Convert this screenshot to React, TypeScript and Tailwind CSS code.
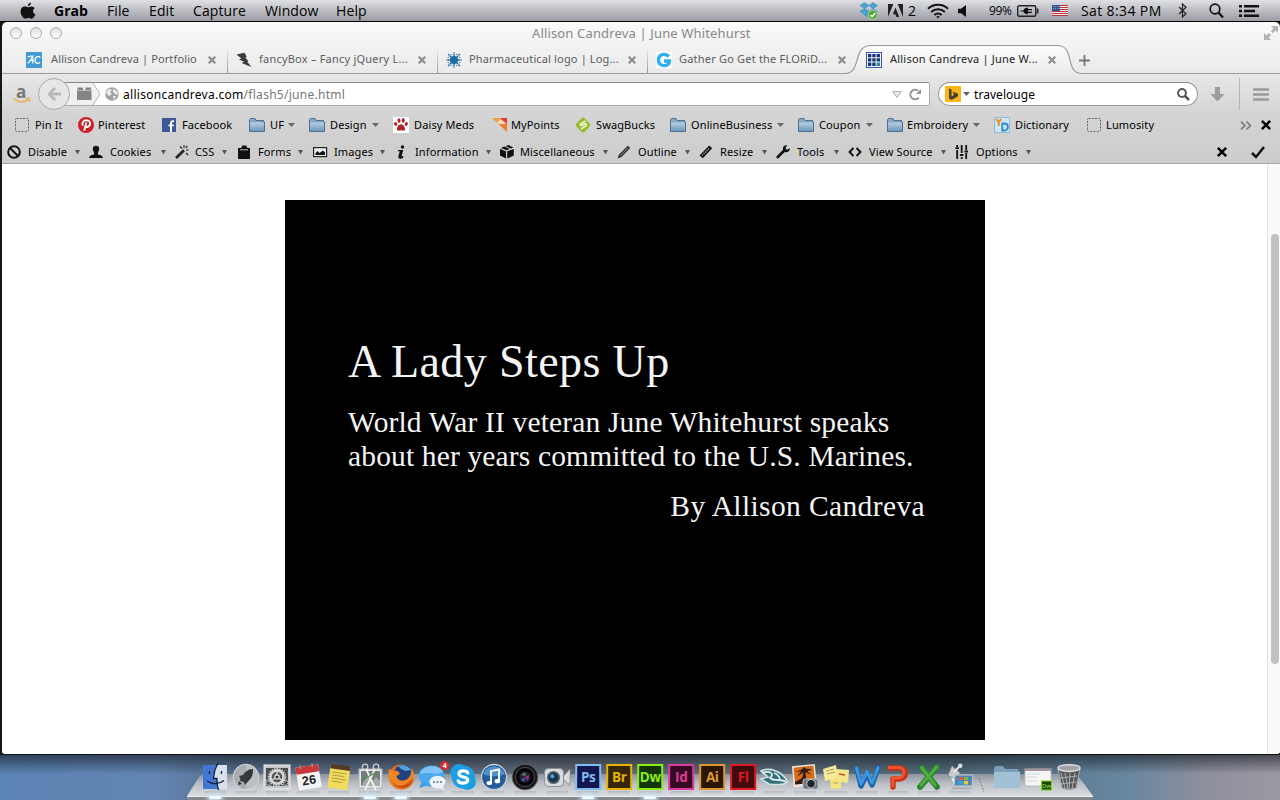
import React from "react";

const MENUS = [
  { t: "File", w: "w-[42px]" },
  { t: "Edit", w: "w-[44px]" },
  { t: "Capture", w: "w-[72px]" },
  { t: "Window", w: "w-[71px]" },
  { t: "Help", w: "w-[50px]" },
];

const AppleLogo = () => (
  <svg width="16" height="18" viewBox="0 0 16 18" fill="#111">
    <path d="M11 0.6C11.1 2.4 9.6 4.1 7.9 4.2C7.7 2.5 9.2 0.9 11 0.6Z" />
    <path d="M8.1 5.2C9 5.2 9.8 4.4 11.4 4.4C12.9 4.4 14.2 5.3 14.8 6.2C12.2 7.6 12.6 11.2 15.4 12.3C14.7 14.2 13.2 16.7 11.6 16.7C10.4 16.7 10 16 8.5 16C7 16 6.5 16.7 5.4 16.7C3.3 16.7 0.6 12.6 0.6 9.4C0.6 6.2 2.6 4.5 4.7 4.5C6.2 4.5 7.3 5.2 8.1 5.2Z" />
  </svg>
);

const Menubar = () => (
  <header className="flex h-[22px] shrink-0 items-center border-b border-black bg-gradient-to-b from-[#dfe0e4] to-[#9c9da3] font-['Lucida_Grande','Open_Sans','Noto_Sans',sans-serif] text-[14px] leading-[20px] text-black">
    <div className="w-[54px] shrink-0 pl-[20px]"><AppleLogo /></div>
    <div className="w-[53px] shrink-0 font-bold">Grab</div>
    {MENUS.map((m) => (
      <div key={m.t} className={`${m.w} shrink-0 whitespace-nowrap tracking-[0.1px]`}>{m.t}</div>
    ))}
    <div className="grow" />
    <div className="flex w-[29px] shrink-0">
      <svg width="20" height="19" viewBox="0 0 20 19">
        <g fill="#4ba3d4" stroke="#2a7db0" strokeWidth=".5">
          <path d="M5.5 1.5L10 4.5L5.5 7.5L1 4.5Z" />
          <path d="M14 1.5L18.5 4.5L14 7.5L10 4.5Z" />
          <path d="M5.5 7.5L10 10.5L5.5 13.5L1 10.5Z" />
          <path d="M14 7.5L18.5 10.5L14 13.5L10 10.5Z" />
          <path d="M10 11.5L14 14L10 16.5L5.5 14Z" />
        </g>
        <circle cx="13.8" cy="13.8" r="4.6" fill="#4fa834" stroke="#b9e2a9" strokeWidth=".8" />
        <path d="M11.5 14L13.2 15.8L16.2 12" fill="none" stroke="#fff" strokeWidth="1.4" />
      </svg>
    </div>
    <div className="flex w-[39px] shrink-0 items-center gap-[5px]">
      <svg width="15" height="13" viewBox="0 0 15 13" fill="#222">
        <path d="M0 0H5.3L0 13ZM9.7 0H15V13ZM7.5 3.6L11.2 13H8.4L7.3 10.2H4.8Z" />
      </svg>
      <span>2</span>
    </div>
    <div className="w-[31px] shrink-0">
      <svg width="22" height="16" viewBox="0 0 22 16" fill="none" stroke="#111" strokeWidth="2">
        <path d="M1 5.8C6.5 0.4 15.5 0.4 21 5.8" />
        <path d="M4.2 9C8 5.4 14 5.4 17.8 9" />
        <path d="M7.3 12.1C9.4 10.1 12.6 10.1 14.7 12.1" />
        <path d="M9.3 13.6Q11 12.3 12.7 13.6L11 15.6Z" fill="#111" stroke="none" />
      </svg>
    </div>
    <div className="w-[31px] shrink-0">
      <svg width="9" height="12" viewBox="0 0 9 12" fill="#111"><path d="M0 3.8H3L8 0V12L3 8.2H0Z" /></svg>
    </div>
    <div className="w-[28px] shrink-0 text-[12px] tracking-[-0.4px]">99%</div>
    <div className="w-[35px] shrink-0">
      <svg width="22" height="12" viewBox="0 0 22 12">
        <rect x=".7" y=".7" width="18" height="10.6" rx="1.5" fill="none" stroke="#222" strokeWidth="1.4" />
        <path d="M19.8 3.5H21.5V8.5H19.8Z" fill="#222" />
        <path d="M3.5 5.4H6.3C7 3.3 9 2.8 11 2.8V4H15V5.3H11V6.7H15V8H11V9.2C9 9.2 7 8.7 6.3 6.6H3.5Z" fill="#111" />
      </svg>
    </div>
    <div className="w-[29px] shrink-0">
      <svg width="16" height="11" viewBox="0 0 16 11">
        <rect width="16" height="11" fill="#f1ecec" />
        <path d="M0 .5H16M0 2.5H16M0 4.5H16M0 6.5H16M0 8.5H16M0 10.5H16" stroke="#b83440" strokeWidth="1" />
        <rect width="8" height="6" fill="#33508f" />
        <path d="M1 1.5H8M1 3.5H8" stroke="#a9b6d2" strokeWidth=".8" strokeDasharray="1 1" />
      </svg>
    </div>
    <div className="w-[97px] shrink-0 whitespace-nowrap tracking-[0.38px]">Sat 8:34 PM</div>
    <div className="w-[31px] shrink-0">
      <svg width="9" height="15" viewBox="0 0 9 15" fill="none" stroke="#222" strokeWidth="1.2"><path d="M1 4L8 10.8L4.5 14V1L8 4.2L1 11" /></svg>
    </div>
    <div className="w-[30px] shrink-0">
      <svg width="15" height="16" viewBox="0 0 15 16" fill="none" stroke="#111"><circle cx="6" cy="6" r="4.8" strokeWidth="1.7" /><path d="M9.4 9.6L14 14.6" strokeWidth="2.2" /></svg>
    </div>
    <div className="w-[41px] shrink-0">
      <svg width="21" height="14" viewBox="0 0 21 14" fill="#111"><path d="M0 1H3V3.6H0ZM5 1H20V3.6H5ZM0 5.7H3V8.3H0ZM5 5.7H16V8.3H5ZM0 10.4H3V13H0ZM5 10.4H20V13H5Z" /></svg>
    </div>
  </header>
);

const CloseX = ({ c = "#8d8d8d", s = 8, sw = 2.2 }: { c?: string; s?: number; sw?: number }) => (
  <svg width={s} height={s} viewBox="0 0 8 8" fill="none" stroke={c} strokeWidth={sw}><path d="M.7 .7L7.3 7.3M7.3 .7L.7 7.3" /></svg>
);

const FavAC = () => (
  <svg width="16" height="16" viewBox="0 0 16 16">
    <rect width="16" height="16" fill="#429bd3" />
    <path d="M1.5 10.5C3 12 4.8 7 6.8 4.5V11.5M2 5.5C2.5 3.8 5 4 7 4.3M3.5 8.5H8M14 6C14.3 3.8 9.3 3.6 9 8.2C9 12.2 13 12 14 10" fill="none" stroke="#fff" strokeWidth="1.2" />
  </svg>
);
const FavBolt = () => (
  <svg width="16" height="16" viewBox="0 0 16 16" fill="#3c3c3c"><path d="M.5 2.5L8.5 .8L10.8 5L9.3 5.6L12.6 9.2L11.2 9.8L15.5 15L5.6 11L8 9.8L3 7.6L5.3 6.4Z" /></svg>
);
const FavSplat = () => (
  <svg width="16" height="16" viewBox="0 0 16 16">
    <circle cx="8" cy="8" r="4" fill="#1b6e9e" />
    <path d="M8 2V14M2 8H14M3.5 3.5L12.5 12.5M12.5 3.5L3.5 12.5" stroke="#1b6e9e" strokeWidth="1.3" />
    <g fill="#1b6e9e"><circle cx="8" cy="1" r=".8" /><circle cx="8" cy="15" r=".8" /><circle cx="1" cy="8" r=".8" /><circle cx="15" cy="8" r=".8" /><circle cx="2.6" cy="2.6" r=".9" /><circle cx="13.4" cy="2.6" r=".9" /><circle cx="2.6" cy="13.4" r=".9" /><circle cx="13.4" cy="13.4" r=".9" /><circle cx="5.2" cy="2.4" r=".6" /><circle cx="10.8" cy="2.4" r=".6" /><circle cx="5.2" cy="13.6" r=".6" /><circle cx="10.8" cy="13.6" r=".6" /><circle cx="2.2" cy="5.4" r=".6" /><circle cx="13.8" cy="5.4" r=".6" /><circle cx="2.2" cy="10.6" r=".6" /><circle cx="13.8" cy="10.6" r=".6" /></g>
  </svg>
);
const FavG = () => (
  <svg width="16" height="16" viewBox="0 0 16 16">
    <rect width="16" height="16" fill="#fff" />
    <path d="M12.8 4.6C11.6 3 9.8 2.4 8 2.4C4.6 2.4 2.4 4.8 2.4 8C2.4 11.4 4.8 13.6 8.1 13.6C11.2 13.6 13.4 11.8 13.4 9H8" fill="none" stroke="#2bb0f2" strokeWidth="3.4" />
  </svg>
);
const FavGrid = () => (
  <svg width="16" height="16" viewBox="0 0 16 16">
    <rect x=".5" y=".5" width="15" height="15" fill="#f1f4fb" stroke="#3b58b0" />
    <path d="M2 2H5.3V5.3H2ZM6.3 2H9.6V5.3H6.3ZM10.6 2H14V5.3H10.6ZM2 6.3H5.3V9.6H2ZM6.3 6.3H9.6V9.6H6.3ZM10.6 6.3H14V9.6H10.6ZM2 10.6H5.3V14H2ZM6.3 10.6H9.6V14H6.3Z" fill="#173474" />
    <path d="M10.6 10.6H14V14H10.6Z" fill="#258b8d" />
  </svg>
);

const TABS = [
  { t: "Allison Candreva | Portfolio", i: <FavAC />, w: "w-[209px]", pad: "pl-[8px]", gap: "w-[25px]", tx: "w-[157px]", tr: "tracking-[0.13px]", line: false },
  { t: "fancyBox – Fancy jQuery L...", i: <FavBolt />, w: "w-[210px]", pad: "pl-[9px]", gap: "w-[23px]", tx: "w-[159px]", tr: "tracking-[0.22px]", line: true },
  { t: "Pharmaceutical logo | Log...", i: <FavSplat />, w: "w-[210px]", pad: "pl-[9px]", gap: "w-[23px]", tx: "w-[159px]", tr: "tracking-[0.15px]", line: true },
  { t: "Gather Go Get the FLORiD...", i: <FavG />, w: "w-[210px]", pad: "pl-[9px]", gap: "w-[23px]", tx: "w-[159px]", tr: "tracking-[0.2px]", line: true },
];

const TabStrip = () => (
  <div className="relative flex h-[30px] shrink-0 items-center text-[11px] text-[#5c5c5c]">
    <svg className="absolute left-0 top-0" width="1278" height="32" viewBox="0 0 1278 32">
      <defs>
        <linearGradient id="tab" x1="0" y1="0" x2="0" y2="1"><stop offset="0" stopColor="#fcfcfc" /><stop offset="1" stopColor="#ebebeb" /></linearGradient>
      </defs>
      <path d="M843 29.5C860 29.5 850 1.5 869 1.5H1055C1074 1.5 1062 29.5 1080 29.5V31H843Z" fill="url(#tab)" />
      <path d="M0 29.5H843C860 29.5 850 1.5 869 1.5H1055C1074 1.5 1062 29.5 1080 29.5H1278" fill="none" stroke="#9a9a9a" strokeWidth="1.2" />
    </svg>
    <div className="relative flex h-full w-full items-center pl-[16px] pt-px">
      {TABS.map((x) => (
        <div key={x.t} className={`${x.w} ${x.pad} relative flex h-full shrink-0 items-center`}>
          {x.line && <span className="absolute bottom-[1px] left-0 h-[26px] w-px bg-gradient-to-b from-transparent to-[#999]" />}
          <div className={`${x.gap} shrink-0`}>{x.i}</div>
          <div className={`${x.tx} ${x.tr} shrink-0 whitespace-nowrap`}>{x.t}</div>
          <CloseX />
        </div>
      ))}
      <div className="flex h-full w-[216px] shrink-0 items-center pl-[9px] text-[#222]">
        <div className="w-[24px] shrink-0"><FavGrid /></div>
        <div className="w-[158px] shrink-0 whitespace-nowrap tracking-[0.22px]">Allison Candreva | June W...</div>
        <CloseX />
      </div>
      <svg className="ml-[6px] mt-[2px]" width="11" height="11" viewBox="0 0 11 11"><path d="M5.5 0V11M0 5.5H11" stroke="#777" strokeWidth="1.8" /></svg>
    </div>
  </div>
);

const TitleBar = () => (
  <div className="relative flex h-[22px] shrink-0 items-center">
    <div className="flex gap-[8px] pl-[8px]">
      {[0, 1, 2].map((k) => (
        <span key={k} className="h-[12px] w-[12px] rounded-full border border-[#a9a9a9] bg-gradient-to-b from-[#dedede] to-white" />
      ))}
    </div>
    <div className="w-[470px]" />
    <div className="whitespace-nowrap pt-px text-[13px] tracking-[0.15px] text-[#888]">Allison Candreva | June Whitehurst</div>
    <svg className="absolute right-[2px] top-[4px]" width="14" height="14" viewBox="0 0 14 14" fill="#b4b4b4">
      <path d="M7 0H14V7L11.6 4.6L9 7.2L6.9 5.1L9.4 2.4Z" /><path d="M0 14V7L2.4 9.4L5 6.9L7.1 9L4.6 11.6L7 14Z" />
    </svg>
  </div>
);

const NavBar = () => (
  <div className="flex h-[40px] shrink-0 items-center text-[12px]">
    <div className="relative h-[22px] w-[36px] shrink-0 pl-[14px]">
      <span className="block font-['Open_Sans',sans-serif] text-[17px] font-bold leading-[18px] text-[#777]">a</span>
      <svg className="absolute left-[11px] top-[14px]" width="18" height="7" viewBox="0 0 18 7">
        <path d="M1 1.5C5 6 11 6 15 2.5M12.5 1.5H16.3V5" fill="none" stroke="#e5b66c" strokeWidth="1.8" />
      </svg>
    </div>
    <div className="relative z-10 flex h-[32px] w-[32px] shrink-0 items-center justify-center rounded-full border border-[#aaa] bg-[#e6e6e6]">
      <svg width="14" height="14" viewBox="0 0 14 14" fill="none" stroke="#b9b9b9" strokeWidth="3"><path d="M8 1L2.3 7L8 13M2.5 7H14" /></svg>
    </div>
    <div className="-ml-[10px] flex h-[24px] w-[870px] shrink-0 items-center rounded-r-[2px] border border-[#aaa] border-t-[#888] bg-white">
      <div className="flex h-[22px] w-[44px] shrink-0 items-center">
        <svg width="44" height="22" viewBox="0 0 44 22">
          <path d="M0 0H32L39 11L32 22H0Z" fill="#f0f0f0" /><path d="M32 0L39 11L32 22" fill="none" stroke="#b5b5b5" />
          <path d="M16.5 4.5H22V7H24.5V4.5H30V7H30.5V17H16V7H16.5Z" fill="#858585" /><path d="M16 7.5H30.5" stroke="#bbb" />
        </svg>
      </div>
      <svg width="14" height="14" viewBox="0 0 14 14"><circle cx="7" cy="7" r="6.8" fill="#a1a1a1" /><path d="M2 4C4 1 6 2 7 3L5 5L7 7L4 9L1 6ZM8 2L12 4L13 8L10 7L8 5ZM8 9L11 9L9 13Z" fill="#ededed" /></svg>
      <div className="ml-[4px] grow whitespace-nowrap pt-px tracking-[0.28px] text-[#777]"><span className="text-black">allisoncandreva.com</span>/flash5/june.html</div>
      <svg width="10" height="7" viewBox="0 0 10 7"><path d="M.8 .6H9.2L5 6.4Z" fill="#eee" stroke="#aaa" /></svg>
      <svg className="ml-[7px] mr-[7px]" width="13" height="13" viewBox="0 0 13 13" fill="none" stroke="#939393" strokeWidth="2"><path d="M9.8 9.6A4.8 4.8 0 1 1 9 2.6" /><path d="M7 6H12V1Z" fill="#939393" stroke="none" /></svg>
    </div>
    <div className="ml-[8px] flex h-[24px] w-[260px] shrink-0 items-center rounded-full border border-[#999] border-t-[#888] bg-white pl-[6px]">
      <svg width="16" height="16" viewBox="0 0 16 16"><rect width="16" height="16" fill="#fdb515" /><path d="M4 2.5L6.5 3.5V10.5L9 9L7.6 5.6L13 7.7V10.2L6.5 14L4 12.4Z" fill="#443d32" /></svg>
      <svg className="ml-[2px]" width="7" height="4" viewBox="0 0 7 4"><path d="M0 0H7L3.5 4Z" fill="#666" /></svg>
      <div className="ml-[4px] grow pt-px tracking-[0.05px] text-black">travelouge</div>
      <svg className="mr-[7px]" width="13" height="13" viewBox="0 0 13 13" fill="none" stroke="#555"><circle cx="5" cy="5" r="3.9" strokeWidth="2" /><path d="M7.8 7.8L12 12" strokeWidth="2.6" /></svg>
    </div>
    <svg className="ml-[12px]" width="15" height="15" viewBox="0 0 15 15" fill="#9c9c9c"><path d="M5 0H10V7H14.5L7.5 14.5L.5 7H5Z" /></svg>
    <div className="ml-[14px] h-[32px] w-px bg-[#b5b5b5]" />
    <svg className="ml-[13px]" width="16" height="13" viewBox="0 0 16 13"><path d="M1 1.5H15M1 6.5H15M1 11.5H15" stroke="#9a9a9a" strokeWidth="2.6" strokeLinecap="round" /></svg>
  </div>
);

const Folder = () => (
  <svg width="16" height="14" viewBox="0 0 16 14">
    <defs><linearGradient id="fold" x1="0" y1="0" x2="0" y2="1"><stop offset="0" stopColor="#b9cfe2" /><stop offset="1" stopColor="#7099bd" /></linearGradient></defs>
    <path d="M.5 13.5V1.5L1.5 .5H6L7 2.5H14.5V4H15.5V13.5Z" fill="#87a7c3" stroke="#4e6f8f" />
    <path d="M1 4.5H15V13H1Z" fill="url(#fold)" />
  </svg>
);
const Dotted = () => (
  <svg width="14" height="14" viewBox="0 0 14 14"><rect x=".5" y=".5" width="13" height="13" rx="1" fill="none" stroke="#666" strokeDasharray="2 1.2" /></svg>
);
const Pinterest = () => (
  <svg width="16" height="16" viewBox="0 0 16 16"><circle cx="8" cy="8" r="8" fill="#cb2027" /><path d="M4.9 8.6C3.4 6 5.4 3.2 8.4 3.2C11.3 3.2 12.5 5.3 12 7.5C11.4 9.9 8.7 10.6 7.6 9.2M8.4 5.6L6.2 13.8" fill="none" stroke="#fff" strokeWidth="1.9" /></svg>
);
const Facebook = () => (
  <svg width="14" height="14" viewBox="0 0 14 14"><rect width="14" height="14" fill="#3b5998" /><path d="M12 3.2C9.7 2.8 9 3.6 9 5.3V14M6.5 7.4H11.8" fill="none" stroke="#fff" strokeWidth="1.9" /></svg>
);
const Paw = () => (
  <svg width="16" height="16" viewBox="0 0 16 16"><rect width="16" height="16" fill="#fff" /><g fill="#b3222c"><ellipse cx="2.7" cy="6.9" rx="1.5" ry="2" transform="rotate(-30 2.7 6.9)" /><ellipse cx="6" cy="3.6" rx="1.5" ry="2.4" /><ellipse cx="10.2" cy="3.4" rx="1.5" ry="2.4" /><ellipse cx="13.3" cy="6.9" rx="1.5" ry="2" transform="rotate(30 13.3 6.9)" /><path d="M8 7.2C10.2 7.2 12.4 10.2 12 12.6C11.4 14.6 9.5 13.3 8 13.3C6.5 13.3 4.6 14.6 4 12.6C3.6 10.2 5.8 7.2 8 7.2Z" /></g></svg>
);
const MyPoints = () => (
  <svg width="16" height="16" viewBox="0 0 16 16"><path d="M0 1H8L6 6.5Z" fill="#f3a03b" /><path d="M8 1H15V7L12 6Z" fill="#e23b20" /><path d="M15 15L6.5 7L15 7Z" fill="#ef7d25" /><path d="M5 6L8.5 2L14 6L11 7.2Z" fill="#fbd5bd" /></svg>
);
const Swag = () => (
  <svg width="16" height="16" viewBox="0 0 16 16"><path d="M8 .3Q9 .3 15 7Q16 8 15 9Q9.5 15.7 8 15.7Q7 15.7 1 9Q0 8 1 7Q7 .3 8 .3Z" fill="#94bd2e" /><path d="M10.5 4L6 6.5C4.5 7.5 5.5 9 7 8.2L9.5 7C11.3 6.2 12 8 10.5 9L6 12" fill="none" stroke="#eaf5c8" strokeWidth="1.6" /></svg>
);
const YD = () => (
  <svg width="16" height="16" viewBox="0 0 16 16"><rect x=".5" y=".5" width="15" height="15" fill="#cfe6f5" stroke="#8fbbd9" /><path d="M2.2 2L4.7 5.2L7.2 2M4.7 5V9" fill="none" stroke="#ef8b20" strokeWidth="2" /><path d="M8.3 6.5H10.3C15 6.5 15 13.5 10.3 13.5H8.3Z" fill="none" stroke="#2e8dcc" strokeWidth="1.9" /></svg>
);

const BOOKMARKS = [
  { t: "Pin It", i: <Dotted />, w: "w-[63px]", g: "w-[20px]", a: false },
  { t: "Pinterest", i: <Pinterest />, w: "w-[84px]", g: "w-[20px]", a: false },
  { t: "Facebook", i: <Facebook />, w: "w-[87px]", g: "w-[20px]", a: false },
  { t: "UF", i: <Folder />, w: "w-[60px]", g: "w-[21px]", a: true },
  { t: "Design", i: <Folder />, w: "w-[84px]", g: "w-[21px]", a: true },
  { t: "Daisy Meds", i: <Paw />, w: "w-[99px]", g: "w-[21px]", a: false },
  { t: "MyPoints", i: <MyPoints />, w: "w-[83px]", g: "w-[19px]", a: false },
  { t: "SwagBucks", i: <Swag />, w: "w-[95px]", g: "w-[21px]", a: false },
  { t: "OnlineBusiness", i: <Folder />, w: "w-[128px]", g: "w-[21px]", a: true },
  { t: "Coupon", i: <Folder />, w: "w-[89px]", g: "w-[21px]", a: true },
  { t: "Embroidery", i: <Folder />, w: "w-[107px]", g: "w-[20px]", a: true },
  { t: "Dictionary", i: <YD />, w: "w-[93px]", g: "w-[21px]", a: false },
  { t: "Lumosity", i: <Dotted />, w: "w-[83px]", g: "w-[19px]", a: false },
];

const Bookmarks = () => (
  <div className="flex h-[25px] shrink-0 items-center pb-[3px] pl-[13px] text-[11px] text-black">
    {BOOKMARKS.map((b) => (
      <div key={b.t} className={`${b.w} flex shrink-0 items-center`}>
        <div className={`${b.g} shrink-0`}>{b.i}</div>
        <div className="w-0 grow whitespace-nowrap tracking-[0.12px]">{b.t}</div>
        {b.a && <svg className="mr-[14px]" width="7" height="4" viewBox="0 0 7 4"><path d="M0 0H7L3.5 4Z" fill="#666" /></svg>}
      </div>
    ))}
    <svg className="ml-[70px]" width="13" height="9" viewBox="0 0 13 9" fill="none" stroke="#777" strokeWidth="1.5"><path d="M1 .6L5 4.5L1 8.4M6.5 .6L10.5 4.5L6.5 8.4" /></svg>
    <div className="ml-[8px]"><CloseX c="#000" s={10} sw={2} /></div>
  </div>
);

const D = ({ children }: { children: React.ReactNode }) => <svg width="15" height="14" viewBox="0 0 15 14" fill="#111" stroke="none">{children}</svg>;

const TOOLS = [
  { t: "Disable", w: "w-[82px]", g: "w-[21px]", m: "mr-[9px]", i: <D><circle cx="7" cy="7" r="5.8" fill="none" stroke="#111" strokeWidth="2" /><path d="M3 3L11 11" stroke="#111" strokeWidth="2" /></D> },
  { t: "Cookies", w: "w-[86px]", g: "w-[21px]", m: "mr-[9px]", i: <D><path d="M3.8 3.5C3.8 -.2 10.2 -.2 10.2 3.5C10.2 5.8 9 7 8.8 8V9.2C12 10.2 13.5 10.5 14 13H0C.5 10.5 2 10.2 5.2 9.2V8C5 7 3.8 5.8 3.8 3.5Z" /></D> },
  { t: "CSS", w: "w-[62px]", g: "w-[20px]", m: "mr-[10px]", i: <D><path d="M1 13L9 5.2" stroke="#222" strokeWidth="2.6" /><path d="M9 0V3M13.5 5H11M12.5 1L10.7 2.8M5 1.5L7 3.5M11 8L13 10" stroke="#222" strokeWidth="1.1" /></D> },
  { t: "Forms", w: "w-[76px]", g: "w-[21px]", m: "mr-[10px]", i: <D><path d="M1 3H4L5.5 .5H9L10.5 3H13V14H1Z" /><path d="M3 4.8H11" stroke="#bbb" /></D> },
  { t: "Images", w: "w-[83px]", g: "w-[21px]", m: "mr-[11px]", i: <D><rect x=".6" y="2.6" width="13" height="9" fill="#eee" stroke="#222" strokeWidth="1.2" /><path d="M2.5 10V8L4.5 6L6.5 8L10 5.5L12 7.5V10Z" /></D> },
  { t: "Information", w: "w-[104px]", g: "w-[19px]", m: "mr-[9px]", i: <D><circle cx="6.5" cy="2" r="1.7" /><path d="M2.2 5H7.3L5.5 11.3H7.6L7 13C3.7 14.3 1.9 13.6 2.4 11.3L3.8 6.3H2Z" /></D> },
  { t: "Miscellaneous", w: "w-[117px]", g: "w-[20px]", m: "mr-[9px]", i: <D><path d="M0 4L6 6.3V13.5L0 10.5ZM7.2 6.3L13.8 4V10.5L7.2 13.5ZM1 3L4.2 1.6L9.8 3.8L6.7 5.2ZM5.5 1.1L8.5 0L13.3 2.4L11 3.4Z" /></D> },
  { t: "Outline", w: "w-[82px]", g: "w-[21px]", m: "mr-[9px]", i: <D><path d="M.5 13.5L2 9.5L10.8 .7L13.2 3L4.5 12Z" fill="#333" /><path d="M3.4 10.3L10.5 3.2" stroke="#aaa" strokeWidth=".8" /></D> },
  { t: "Resize", w: "w-[77px]", g: "w-[21px]", m: "mr-[9px]", i: <D><path d="M.5 10.5L10.2 .5L13.2 3.2L3.8 13.2Z" /><path d="M3.2 10.4L10.4 3.2" stroke="#ddd" strokeWidth="1.3" strokeDasharray="1 1.1" /></D> },
  { t: "Tools", w: "w-[72px]", g: "w-[21px]", m: "mr-[9px]", i: <D><path d="M1.8 12L9 4.8" stroke="#111" strokeWidth="2.8" strokeLinecap="round" /><path d="M13.8 3.2L10.6 5L9.2 3.3L11.2 .4C8 -.2 6.2 2.4 7.2 5.3L9 7.2C11.9 7.7 14.2 6.2 13.8 3.2Z" /></D> },
  { t: "View Source", w: "w-[107px]", g: "w-[21px]", m: "mr-[9px]", i: <D><path d="M5.5 3L1.5 7L5.5 11M8.5 3L12.5 7L8.5 11" fill="none" stroke="#111" strokeWidth="1.9" /></D> },
  { t: "Options", w: "w-[85px]", g: "w-[21px]", m: "mr-[9px]", i: <D><path d="M2.2 0V2M2.2 5V14M6.7 0V8M6.7 12V14M11.2 0V5M11.2 8V14" stroke="#111" strokeWidth="1.8" /><path d="M.4 3.2H4M4.9 10H8.5M9.4 6.5H13" stroke="#111" strokeWidth="1.8" /></D> },
];

const DevBar = () => (
  <div className="flex h-[25px] shrink-0 items-center border-b border-[#a6a6a6] pl-[5px] pt-[2px] text-[11px] text-black">
    {TOOLS.map((b) => (
      <div key={b.t} className={`${b.w} flex shrink-0 items-center`}>
        <div className={`${b.g} shrink-0`}>{b.i}</div>
        <div className="w-0 grow whitespace-nowrap tracking-[0.12px]">{b.t}</div>
        <svg className={b.m} width="5" height="5" viewBox="0 0 5 5"><path d="M0 0H5L2.5 4.5Z" fill="#555" /></svg>
      </div>
    ))}
    <div className="ml-[177px]"><CloseX c="#000" s={10} sw={2} /></div>
    <svg className="ml-[24px]" width="14" height="13" viewBox="0 0 14 13" fill="none" stroke="#111" strokeWidth="2.5"><path d="M1 7L5 11L13 1" /></svg>
  </div>
);

const Page = () => (
  <main className="flex grow bg-white">
    <div className="flex grow justify-start pl-[283px] pt-[36px]">
      <section className="h-[540px] w-[700px] shrink-0 bg-black pl-[63px] font-['Victorian_LET','Liberation_Serif',serif] text-[#f4f4f4]">
        <h1 className="whitespace-nowrap pt-[136px] text-[46px] leading-[52px] tracking-[0.4px]">A Lady Steps Up</h1>
        <p className="mt-[17px] whitespace-nowrap text-[29.5px] leading-[34px] tracking-[0.15px]">
          World War II veteran June Whitehurst speaks<br />about her years committed to the U.S. Marines.
        </p>
        <p className="mt-[16px] whitespace-nowrap pr-[60px] text-right text-[29.5px] leading-[34px] tracking-[0.38px]">By Allison Candreva</p>
      </section>
    </div>
    <div className="w-[13px] shrink-0 border-l border-[#e2e2e2] bg-[#fafafa] pl-[3px] pt-[70px]">
      <div className="h-[430px] w-[8px] rounded-full bg-[#c1c1c1]" />
    </div>
  </main>
);

const S = ({ children }: { children: React.ReactNode }) => <svg width="28" height="28" viewBox="0 0 28 28">{children}</svg>;

const Adobe = ({ t, bg, fg }: { t: string; bg: string; fg: string }) => (
  <S>
    <rect x="2.2" y="2" width="24" height="24" fill={bg} stroke={fg} strokeWidth="2" />
    <text x="14.2" y="18.8" textAnchor="middle" fontFamily="Open Sans, sans-serif" fontWeight="700" fontSize="13.5" letterSpacing="-.4" fill={fg}>{t}</text>
  </S>
);

const DOCK: { k: string; i: React.ReactNode; on?: boolean }[] = [
  { k: "finder", on: true, i: <S><path d="M2 2H26V26H2Z" fill="#d7e0ef" /><path d="M2 2H16C13 7 13 11 12.5 15H16L17 26H2Z" fill="#4176d3" /><path d="M17 0C12.5 8 13 12 12.5 15.5H16C15.5 20 16.5 23 17.5 27M6 18C11 21.5 18 21.5 23 17.5M8.5 8V11M20.5 8V11" fill="none" stroke="#172239" strokeWidth="1.3" /></S> },
  { k: "launchpad", i: <S><circle cx="14" cy="14" r="12.8" fill="#a9acb0" stroke="#d8dadd" /><path d="M14 1.5V26.5A12.5 12.5 0 0 0 14 1.5Z" fill="#c5c8cb" opacity=".7" /><path d="M21 6C16 6 13 9 11 12L7 13L8.5 15.5L8 18L12 19L13 22L15.5 19C19 16 21.5 12 21 6ZM7 18L6 22L10 21Z" fill="#35383d" /></S> },
  { k: "prefs", i: <S><rect x="1" y="2" width="26" height="24" fill="#c7c9cb" stroke="#eee" /><rect x="3" y="5" width="22" height="18" fill="#4b4e52" /><circle cx="14" cy="14" r="6.6" fill="#555" stroke="#d5d5d5" strokeWidth="2.6" /><circle cx="14" cy="14" r="8.4" fill="none" stroke="#d5d5d5" strokeWidth="1.6" strokeDasharray="1.4 1.2" /><circle cx="14" cy="14" r="2.2" fill="#333" stroke="#e5e5e5" strokeWidth="1.2" /><path d="M14 12V7.5M12.3 15L8.4 17.3M15.7 15L19.6 17.3" stroke="#ddd" strokeWidth="1.4" /><circle cx="5.5" cy="20" r="2.6" fill="none" stroke="#ccc" strokeWidth="2" strokeDasharray="1 1" /><circle cx="22.5" cy="20" r="2.6" fill="none" stroke="#ccc" strokeWidth="2" strokeDasharray="1 1" /></S> },
  { k: "calendar", i: <S><g transform="rotate(-9 14 14)"><rect x="3" y="3" width="23" height="23" fill="#f3f3f3" /><rect x="3" y="3" width="23" height="7" fill="#c8383a" /><path d="M8 1V5M20 1V5" stroke="#999" strokeWidth="1.3" /><text x="14.5" y="21.5" textAnchor="middle" fontFamily="Liberation Sans, sans-serif" fontWeight="700" fontSize="12.5" fill="#222">26</text></g></S> },
  { k: "notes", i: <S><g transform="rotate(8 14 14)"><rect x="4" y="3" width="20" height="23" fill="#f0dc5e" /><rect x="4" y="2" width="20" height="4.5" fill="#543b27" /><path d="M7 10H21M7 13H19M7 16H21M7 19H18" stroke="#b39e3c" strokeWidth="1" /></g></S> },
  { k: "grab", on: true, i: <S><rect x="3" y="6" width="23" height="19" fill="#e9e9e9" stroke="#b3b3b3" /><path d="M5 8H24V23H5Z" fill="#777b7e" /><path d="M5 23L12 12L17 18L20 14L24 18V23Z" fill="#a7aaa8" /><circle cx="9" cy="4" r="2.8" fill="none" stroke="#ccc" strokeWidth="1.3" /><circle cx="20" cy="4" r="2.8" fill="none" stroke="#ccc" strokeWidth="1.3" /><path d="M10 6L20 27M19 6L9 27" stroke="#f0f0f0" strokeWidth="1.8" /><path d="M6 17L21 9" stroke="#459343" strokeWidth="1.1" /></S> },
  { k: "firefox", on: true, i: <S><circle cx="14.5" cy="14" r="12.8" fill="#e66b1c" /><circle cx="16.5" cy="11" r="9.6" fill="#20427f" /><path d="M11 3C16 1 22 3 24 7L19 8L14 6Z" fill="#4fa5db" /><path d="M2 6L6 7.5L11 8L13 11L9.5 13C10 17 15 19 19.5 16.5C24 13 25 9 23.5 5C29 10 28 18 23 23C17 28 8 27 3.5 21C1 16 1 10 2 6Z" fill="#ee8424" /><path d="M4 17C8 25 19 25 26 15C25 27 9 29 4 17Z" fill="#c9481a" /></S> },
  { k: "messages", i: <S><ellipse cx="13.5" cy="13" rx="12.8" ry="10.5" fill="#4ba7ee" /><path d="M4 19L1 25L10 22Z" fill="#3d9be8" /><path d="M2 11C4 2 22 1 25 9C19 13 10 8 2 11Z" fill="#9ad2f8" opacity=".7" /><ellipse cx="19.5" cy="19" rx="8" ry="6.3" fill="#edf3f9" /><path d="M24 23L27 27L20 25Z" fill="#edf3f9" /><g fill="#6b8098"><circle cx="16" cy="19" r="1.1" /><circle cx="19.5" cy="19" r="1.1" /><circle cx="23" cy="19" r="1.1" /></g></S> },
  { k: "skype", i: <S><circle cx="10" cy="9.5" r="8.5" fill="#1b9fe3" /><circle cx="18.5" cy="18.5" r="8.5" fill="#1b9fe3" /><circle cx="14.3" cy="14" r="11.5" fill="#1b9fe3" /><path d="M18.8 10C17.5 7 9.9 7 9.9 10.7C9.9 15 18.7 13 18.7 17.1C18.7 21 10.5 21 9.2 17.8" fill="none" stroke="#fff" strokeWidth="3.1" strokeLinecap="round" /></S> },
  { k: "itunes", i: <S><circle cx="14" cy="14" r="12.5" fill="#245c9c" stroke="#c3ccd5" strokeWidth="1.3" /><path d="M3 11C7 1 21 1 25 11C18 14 10 14 3 11Z" fill="#6eb4e7" opacity=".6" /><path d="M11 20V8L19 6.5V18" fill="none" stroke="#f4f7fa" strokeWidth="2" /><ellipse cx="9.3" cy="20" rx="2.8" ry="2.1" fill="#fff" /><ellipse cx="17.3" cy="18.2" rx="2.8" ry="2.1" fill="#fff" /></S> },
  { k: "aperture", i: <S><circle cx="14" cy="14" r="13" fill="#1a1a1c" stroke="#767677" strokeWidth=".8" /><circle cx="14" cy="14" r="9.5" fill="#050505" stroke="#4f4f53" /><circle cx="14" cy="14" r="5.6" fill="#2d1b40" /><path d="M10 12L14 9L15 13Z" fill="#4b8a41" /><path d="M14 14L18 12L17 18Z" fill="#9f307b" /><path d="M14 14L10 17L13 19Z" fill="#2d7494" /></S> },
  { k: "facetime", i: <S><path d="M20 14L27 6V22L20 16Z" fill="#d9dcdf" stroke="#8b8f94" strokeWidth=".8" /><rect x="1.5" y="5.5" width="19" height="18" rx="4" fill="#d9dcdf" stroke="#8b8f94" /><circle cx="10.5" cy="14.5" r="6.6" fill="#5e6973" /><circle cx="10.5" cy="14.5" r="5" fill="#19364f" /><circle cx="9.3" cy="13.3" r="2" fill="#4da6df" /></S> },
  { k: "ps", on: true, i: <Adobe t="Ps" bg="#14164f" fg="#7fbdf3" /> },
  { k: "br", i: <Adobe t="Br" bg="#36260c" fg="#e6b400" /> },
  { k: "dw", on: true, i: <Adobe t="Dw" bg="#13350a" fg="#8dec12" /> },
  { k: "id", i: <Adobe t="Id" bg="#350b24" fg="#dc3b9b" /> },
  { k: "ai", i: <Adobe t="Ai" bg="#2b1608" fg="#dd9a31" /> },
  { k: "fl", i: <Adobe t="Fl" bg="#420b0e" fg="#dd1a1f" /> },
  { k: "swirl", i: <S><path d="M1 8C9 4 22 8 27 18C27 22 17 22 9 21L1 16L8 14Z" fill="#2f7079" stroke="#d1e4e5" strokeWidth="1.6" /><path d="M2 10C10 7 15 11 10 15C15 19 21 15 26 19M14 10C17 11 19 13 20 16" fill="none" stroke="#e0eded" strokeWidth="1.8" /></S> },
  { k: "iphoto", i: <S><g transform="rotate(-6 14 14)"><rect x="2" y="2" width="23" height="21" fill="#e9e7dc" /><rect x="3.5" y="3.5" width="20" height="17" fill="#d96b19" /><path d="M3.5 18L11 15L13 9L6 13L11 8L5 8L12 6L14 4L16 6L22 7L17 8.5L21 13L15 9L15 16L23.5 18V20.5H3.5Z" fill="#2e1a10" /></g><rect x="12" y="16" width="15" height="10" rx="2" fill="#6e7781" stroke="#b4b9bf" /><circle cx="20" cy="20.7" r="4.3" fill="#20252b" stroke="#ccc" /></S> },
  { k: "stickies", i: <S><path d="M1 6L14 2L16 15L3 18Z" fill="#f5e99b" /><path d="M14 6L27 7L26 20L13 18Z" fill="#f3e688" /><path d="M8 16L19 16L19 25L9 26Z" fill="#f4e47b" /><path d="M4 8L12 6M5 11L13 9M11 20H16" stroke="#a99c51" /><path d="M17 11L23 12" stroke="#c54a34" strokeWidth="1.5" /></S> },
  { k: "word", i: <S><path d="M4 6L8 23L14 10L19 22L25 5" fill="none" stroke="#1e63ad" strokeWidth="5.4" strokeLinejoin="round" strokeLinecap="round" /><path d="M3.5 5L8 21L14 8.5L19 20L25 5" fill="none" stroke="#3d97dc" strokeWidth="3" strokeLinejoin="round" strokeLinecap="round" /></S> },
  { k: "powerpoint", i: <S><path d="M6 5H15C24 5 23 16 15 16H9V24" fill="none" stroke="#c92f17" strokeWidth="5.4" strokeLinecap="round" strokeLinejoin="round" /><path d="M5.5 4.5H15C22 4.5 21 14.8 15 15H8.8V23" fill="none" stroke="#ec542e" strokeWidth="3" strokeLinecap="round" /></S> },
  { k: "excel", i: <S><path d="M7 5L22 24M22 4L5 24" stroke="#2c8332" strokeWidth="5.8" strokeLinecap="round" /><path d="M6.5 4.5L20 22M21.5 4L6 22" stroke="#4fae41" strokeWidth="3" strokeLinecap="round" /></S> },
  { k: "remote", i: <S><path d="M2 12C6 17 13 15 14 10L6 3Z" fill="#c8ccd0" stroke="#888" /><path d="M8 9L14 3M6 15L10 22" stroke="#eee" strokeWidth="1.8" fill="none" /><circle cx="14.3" cy="2.8" r="2.2" fill="#ddd" /><path d="M9 12H27L26 23H8Z" fill="#4d85bb" stroke="#ccc" /><path d="M13 14H17V17H13Z" fill="#e65b28" /><path d="M18 14H22V17H18Z" fill="#7abc36" /><path d="M12.5 18H17V21.5H12Z" fill="#32a6df" /><path d="M18 18H22V21.5H18Z" fill="#f4c728" /><path d="M7 24H26V26.5H5Z" fill="#aeb5bb" /></S> },
];

const Dock = () => (
  <footer className="relative h-[45px] shrink-0">
    <svg className="absolute left-0 top-0" width="1280" height="45" viewBox="0 0 1280 45">
      <defs>
        <linearGradient id="shelf" x1="0" y1="0" x2="0" y2="1"><stop offset="0" stopColor="#8d939d" /><stop offset=".45" stopColor="#bcc0c6" /><stop offset="1" stopColor="#dadcdf" /></linearGradient>
        <linearGradient id="shade" x1="0" y1="0" x2="0" y2="1"><stop offset="0" stopColor="#10161e" stopOpacity=".6" /><stop offset="1" stopColor="#10161e" stopOpacity="0" /></linearGradient>
      </defs>
      <rect width="1280" height="19" fill="url(#shade)" />
      <path d="M207 19H1073Q1077 19 1079 22L1093 41H187L199 22Q202 19 207 19Z" fill="url(#shelf)" />
      <path d="M187 41H1093V44Q1093 45 1090 45H190Q187 45 187 44Z" fill="#85898f" />
      <path d="M187 41.5H1093" stroke="#eceef0" strokeWidth="1" />
      <path d="M979 23L984 37" stroke="#747b83" strokeDasharray="2 1.5" />
    </svg>
    <div className="relative flex h-full items-start pl-[201px] pt-[8px]">
      {DOCK.map((d) => (
        <div key={d.k} className="relative flex w-[31.05px] shrink-0 flex-col items-start">
          {d.i}
          <div className="ml-[3px] h-[4px] w-[22px] bg-gradient-to-b from-[#555f6d]/20 to-transparent" />
          {d.on && <div className="ml-[8px] mt-px h-[3px] w-[12px] rounded-sm bg-[#f2fbff] shadow-[0_0_4px_2px_#c8e6f7]" />}
          {d.k === "messages" && <span className="absolute -top-[2px] right-0 h-[9px] w-[9px] rounded-full bg-[#dd2c30] text-center text-[7px] font-bold leading-[9px] text-white">4</span>}
        </div>
      ))}
      <div className="ml-[16px] flex gap-[3px]">
        <S><path d="M1 25V5L3 3H10L12 6H25V8H27V25Z" fill="#7b9fb9" /><path d="M1 9H27V25H1Z" fill="#a1c1d7" /></S>
        <S><rect x="1" y="6" width="26" height="17" fill="#f5f5f6" stroke="#bbb" /><path d="M1 7H27" stroke="#8f6f78" strokeWidth="1.4" /><path d="M3 11H16M3 14H12M3 18H14" stroke="#ccd" strokeWidth=".8" /><rect x="17.5" y="18" width="10" height="9" fill="#21450d" stroke="#80d91c" /><text x="22.5" y="25" fontSize="6" textAnchor="middle" fill="#9ded31">Dw</text></S>
        <S><path d="M3 6L7 25Q14 28 21 25L25 6Q14 12 3 6Z" fill="#55585c" stroke="#aaa" /><ellipse cx="14" cy="5" rx="11" ry="3.3" fill="#a0a4a8" stroke="#ddd" strokeWidth="1.4" /><path d="M6 10L10 25M10 10L13 26M15 10L14 26M20 10L17 26M5 15L22 13M6 21L21 19" stroke="#b5b8bb" strokeWidth=".9" /></S>
      </div>
    </div>
  </footer>
);

export default function App() {
  return (
    <div className="flex h-[800px] w-[1280px] flex-col overflow-hidden bg-[linear-gradient(90deg,#5b83b4_0%,#6285b3_12%,#56708f_18%,#646c78_45%,#526c7c_75%,#6787a0_88%,#8e8f9c_94%,#9c99a4_100%)]">
      <Menubar />
      <div className="flex h-[733px] shrink-0 bg-[#171717] pl-[2px]">
        <div className="flex grow flex-col overflow-hidden rounded-b-[4px] rounded-t-[5px] border-b border-[#111] bg-[linear-gradient(180deg,#fafafa_0px,#ebebeb_48px,#e8e8e8_52px,#d4d4d4_92px,#cccccc_142px)] font-['Lucida_Grande','Noto_Sans',sans-serif]">
          <TitleBar />
          <TabStrip />
          <NavBar />
          <Bookmarks />
          <DevBar />
          <Page />
        </div>
      </div>
      <Dock />
    </div>
  );
}
